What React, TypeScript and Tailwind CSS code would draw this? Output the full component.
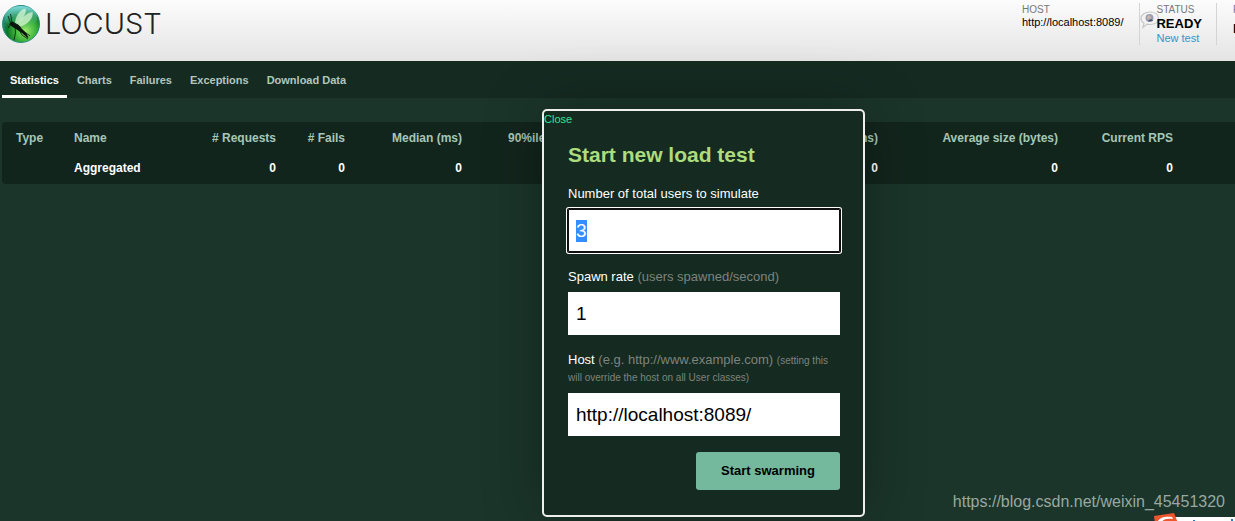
import { useEffect, useRef, useState } from "react";

type Column = { label: string; width: string; align: string };

const tabs = ["Statistics", "Charts", "Failures", "Exceptions", "Download Data"];

const columns: Column[] = [
  { label: "Type", width: "w-[58px]", align: "text-left" },
  { label: "Name", width: "w-[120px]", align: "text-left" },
  { label: "# Requests", width: "w-[110px]", align: "text-right" },
  { label: "# Fails", width: "w-[69px]", align: "text-right" },
  { label: "Median (ms)", width: "w-[117px]", align: "text-right" },
  { label: "90%ile (ms)", width: "w-[112px]", align: "text-right" },
  { label: "Average (ms)", width: "w-[119px]", align: "text-right" },
  { label: "Min (ms)", width: "w-[92px]", align: "text-right" },
  { label: "Max (ms)", width: "w-[93px]", align: "text-right" },
  { label: "Average size (bytes)", width: "w-[180px]", align: "text-right" },
  { label: "Current RPS", width: "w-[115px]", align: "text-right" },
];

function Logo() {
  return (
    <svg viewBox="0 0 40 40" className="h-10 w-10 shrink-0" aria-hidden="true">
      <defs>
        <radialGradient id="orb" cx="0.62" cy="0.68" r="0.62">
          <stop offset="0" stopColor="#9be86c" />
          <stop offset="0.45" stopColor="#3fb53c" />
          <stop offset="0.8" stopColor="#0d7326" />
          <stop offset="1" stopColor="#1e8a72" />
        </radialGradient>
        <linearGradient id="shine" x1="0" y1="0" x2="0" y2="1">
          <stop offset="0" stopColor="#86e0e4" stopOpacity="0.95" />
          <stop offset="1" stopColor="#3cae62" stopOpacity="0" />
        </linearGradient>
      </defs>
      <circle cx="20" cy="20" r="18.5" fill="url(#orb)" stroke="#2b8f80" strokeWidth="1" />
      <ellipse cx="20" cy="13.5" rx="16.5" ry="11.5" fill="url(#shine)" />
      <path d="M14 20C14 14 18 6 24 4.500c3 2.500-2 11-8 16z" fill="#d6f7d8" opacity="0.75" />
      <path d="M16 21.500c3-6 9-13 15.500-13.500C33 13 27 21 18 23z" fill="#e4fadc" opacity="0.7" />
      <path
        d="M8.500 19.500c.5-1.500 2.500-2 4-1.500l3.500 2c2 1 3.500 2.500 4.500 4.500l5 5 2 4.500-1.500-.5-5-4.500-4.500-3-4-2.500-3-2z"
        fill="#0a150e"
      />
      <path
        d="M9.500 18.500L7 12M11 18L9.500 10M14 23l.5 6-1.500 7M17 24l4 7 6 4M21 26l8 6M9 20l-1.500 4"
        fill="none"
        stroke="#0a150e"
        strokeWidth="0.8"
      />
    </svg>
  );
}

function Bubble() {
  return (
    <svg viewBox="0 0 20 18" className="absolute top-2 left-0 h-[18px] w-5" aria-hidden="true">
      <path
        d="M10 1c5 0 8.500 2.500 8.500 6.300S15 13.500 10 13.500c-1 0-2-.1-3-.4L3 16.500 4 12C2 11 1 9.500 1 7.500 1 3.500 5 1 10 1z"
        fill="#f3f3f3"
        stroke="#c6c6c6"
        strokeWidth="1.2"
      />
      <circle cx="9.500" cy="7" r="4" fill="#9aa0b2" />
      <circle cx="9" cy="6.500" r="2" fill="#c9b5a8" />
      <path d="M8 10.500c1-3 4-3 5-.5z" fill="#4c5878" />
    </svg>
  );
}

export default function App() {
  const [activeTab, setActiveTab] = useState("Statistics");
  const [open, setOpen] = useState(true);
  const usersRef = useRef<HTMLInputElement>(null);

  useEffect(() => {
    if (open) usersRef.current?.select();
  }, [open]);

  return (
    <div className="relative min-h-screen overflow-hidden bg-[#1b352a] font-['Liberation_Sans',Arial,sans-serif] text-[11px] text-white">
      <header className="flex h-[61px] justify-between bg-linear-to-b from-[#fcfcfc] to-[#e4e4e4]">
        <div className="flex items-start gap-1 pt-1 pl-px">
          <Logo />
          <span className="font-['Inter',sans-serif] text-[29px] leading-10 font-light text-[#222]">LOCUST</span>
        </div>

        <div className="flex h-[45px] pt-[3px] leading-[13px] text-black">
          <div className="pr-4">
            <div className="text-[10px] text-[#777]">HOST</div>
            <div>http://localhost:8089/</div>
          </div>
          <div className="relative border-l border-[#d4d4d4] pr-3.5 pl-4">
            <Bubble />
            <div className="relative text-[10px] text-[#777]">STATUS</div>
            <div className="relative text-[13px] leading-[15px] font-bold">READY</div>
            <button
              type="button"
              className="block leading-[15px] text-[#3495c8]"
              onClick={() => setOpen(true)}
            >
              New test
            </button>
          </div>
          <div className="w-[19px] overflow-hidden border-l border-[#d4d4d4] pl-4">
            <div className="text-[10px] text-[#777]">RPS</div>
            <div className="text-[13px] leading-[26px] font-bold">RPS</div>
          </div>
        </div>
      </header>

      <nav className="flex h-[37px] gap-0.5 bg-[#152b22] pl-0.5">
        {tabs.map((tab) => (
          <button
            key={tab}
            type="button"
            onClick={() => setActiveTab(tab)}
            className={
              tab === activeTab
                ? "border-b-3 border-white px-2 pt-1 font-bold text-white"
                : "border-b-3 border-transparent px-2 pt-1 font-bold text-[#b3c6bd]"
            }
          >
            {tab}
          </button>
        ))}
      </nav>

      <main className="pt-6 pl-0.5">
        <table className="w-full table-fixed rounded-l-sm bg-[#12251d] font-bold">
          <thead>
            <tr className="h-8 text-[12px] text-[#a6c6b8]">
              {columns.map((col) => (
                <th key={col.label} className={`px-3.5 whitespace-nowrap ${col.width} ${col.align}`}>
                  {col.label}
                </th>
              ))}
              <th />
            </tr>
          </thead>
          <tbody>
            <tr className="h-[30px] text-[12px]">
              <td />
              <td className="px-3.5 pb-0.5">Aggregated</td>
              {columns.slice(2).map((col) => (
                <td key={col.label} className="px-3.5 pb-0.5 text-right">
                  0
                </td>
              ))}
              <td />
            </tr>
          </tbody>
        </table>
      </main>

      {open && (
        <div
          role="dialog"
          aria-labelledby="dialog-title"
          className="absolute top-[109px] left-[542px] w-[323px] rounded-[5px] border-2 border-[#eee] bg-[#152b22] shadow-[0_0_60px_rgba(0,0,0,0.3)]"
        >
          <button type="button" className="block leading-4 text-[#2be59b]" onClick={() => setOpen(false)}>
            Close
          </button>
          <form className="pr-[23px] pb-[25px] pl-6 text-[13px]" onSubmit={(e) => e.preventDefault()}>
            <h2 id="dialog-title" className="pt-4 text-[21px] leading-6 font-bold text-[#addc7d]">
              Start new load test
            </h2>
            <label htmlFor="users" className="mt-[19px] block leading-4">
              Number of total users to simulate
            </label>
            <input
              id="users"
              ref={usersRef}
              defaultValue="3"
              className="mt-[7px] block h-[43px] w-full rounded-[1px] bg-white px-2 text-[19px] text-black shadow-[0_0_0_1px_#101010,0_0_0_2px_#fff,inset_0_0_0_1px_#101010] outline-none selection:bg-[#338fff] selection:text-white"
            />
            <label htmlFor="rate" className="mt-[17px] block leading-4">
              Spawn rate <span className="text-[#7d837d]">(users spawned/second)</span>
            </label>
            <input
              id="rate"
              defaultValue="1"
              className="mt-[7px] block h-[43px] w-full bg-white px-2 text-[19px] text-black"
            />
            <label htmlFor="host" className="mt-[17px] block leading-4">
              Host <span className="text-[#7d837d]">(e.g. http://www.example.com) </span>
              <span className="text-[10px] text-[#7d837d]">
                (setting this will override the host on all User classes)
              </span>
            </label>
            <input
              id="host"
              defaultValue="http://localhost:8089/"
              className="mt-[7px] block h-[43px] w-full bg-white px-2 text-[19px] text-black"
            />
            <button
              type="submit"
              className="mt-4 ml-auto block h-[38px] w-36 rounded-[3px] bg-[#74b99d] font-bold text-black"
            >
              Start swarming
            </button>
          </form>
        </div>
      )}

      <div className="absolute right-[10px] bottom-[9px] text-[16px] leading-5 text-[#9aa8a1]">
        https://blog.csdn.net/weixin_45451320
      </div>
      <div className="absolute right-0 bottom-0 h-2 w-[82px] overflow-hidden">
        <svg viewBox="0 0 82 10" className="h-[10px] w-[82px]" aria-hidden="true">
          <path d="M16 4h66v6H16z" fill="#fff" />
          <path d="M1 3L21 0l4 10H2z" fill="#f0562b" />
          <path d="M5 8c2-4 8-5 14-4l1 2c-6-1-10 0-12 4z" fill="#fff" />
          <path d="M40 7h2v2h-2zM78 6h2v4h-2z" fill="#2878c8" />
        </svg>
      </div>
    </div>
  );
}
